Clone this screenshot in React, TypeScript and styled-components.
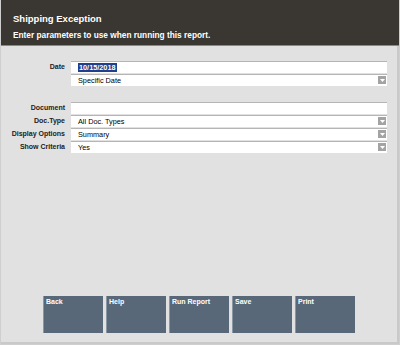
import React from 'react';
import styled, {createGlobalStyle} from 'styled-components';

const GlobalStyle = createGlobalStyle`
  html, body {
    margin: 0;
    padding: 0;
    background: #f2f2f2;
  }
  body {
    font-family: "Liberation Sans", Arial, sans-serif;
  }
`

const fields = [
    {label: 'Document', value: '', select: false},
    {label: 'Doc.Type', value: 'All Doc. Types', select: true},
    {label: 'Display Options', value: 'Summary', select: true},
    {label: 'Show Criteria', value: 'Yes', select: true},
]

const buttons = ['Back', 'Help', 'Run Report', 'Save', 'Print']

const DropArrow = () => (
    <ArrowBox>
        <svg width="5" height="3" viewBox="0 0 5 3">
            <path d="M0 0H5L2.5 3Z" fill="#fff"/>
        </svg>
    </ArrowBox>
)

export default function App() {
    return (
        <>
            <GlobalStyle/>
            <Window>
                <Header>
                    <Title>Shipping Exception</Title>
                    <Subtitle>Enter parameters to use when running this report.</Subtitle>
                </Header>
                <Body>
                    <Form $after={16}>
                        <Label>Date</Label>
                        <Stack>
                            <Field>
                                <Selected>10/15/2018</Selected>
                            </Field>
                            <Field>
                                Specific Date
                                <DropArrow/>
                            </Field>
                        </Stack>
                    </Form>
                    <Form>
                        {fields.map(f => (
                            <React.Fragment key={f.label}>
                                <Label>{f.label}</Label>
                                <Field>
                                    {f.value}
                                    {f.select && <DropArrow/>}
                                </Field>
                            </React.Fragment>
                        ))}
                    </Form>
                    <Spacer/>
                    <ButtonRow>
                        {buttons.map(b => (
                            <ActionButton key={b}>{b}</ActionButton>
                        ))}
                    </ButtonRow>
                </Body>
            </Window>
        </>
    );
}

const Window = styled.div`
  width: 400px;
  height: 345px;
  box-sizing: border-box;
  display: flex;
  flex-direction: column;
  border: 1px solid #cfcfcf;
  border-top: none;
`

const Header = styled.div`
  height: 46px;
  box-sizing: border-box;
  background: #3a3632;
  color: #fff;
  padding: 13px 12px 0;
  border-bottom: 1px solid #8a8886;
`

const Title = styled.div`
  font-size: 9.5px;
  font-weight: bold;
  line-height: 12px;
`

const Subtitle = styled.div`
  font-size: 8.3px;
  font-weight: bold;
  line-height: 10px;
  margin-top: 5px;
`

const Body = styled.div`
  flex: 1;
  background: #e1e1e1;
  border-right: 2px solid #c9c9c9;
  border-bottom: 2px solid #c9c9c9;
  padding-top: 15px;
  display: flex;
  flex-direction: column;
`

const Form = styled.div<{ $after?: number }>`
  display: grid;
  grid-template-columns: 64px 316px;
  column-gap: 6px;
  row-gap: 1px;
  align-items: center;
  margin-bottom: ${p => p.$after ?? 0}px;
`

const Stack = styled.div`
  display: flex;
  flex-direction: column;
  gap: 1px;
`

const Label = styled.div`
  font-size: 7px;
  font-weight: bold;
  color: #222;
  text-align: right;
  align-self: start;
  padding-top: 2px;
`

const Field = styled.div`
  position: relative;
  height: 12px;
  box-sizing: border-box;
  background: #fff;
  border-top: 1px solid #b5b5b5;
  padding: 0 7px;
  font-size: 7.3px;
  line-height: 11px;
  color: #000;
`

const Selected = styled.span`
  background: #1f3f8f;
  color: #fff;
  font-weight: bold;
  padding: 0 1px;
`

const ArrowBox = styled.span`
  position: absolute;
  right: 1px;
  top: 1px;
  width: 8px;
  height: 8px;
  background: #a3a3a3;
  display: flex;
  align-items: center;
  justify-content: center;
`

const Spacer = styled.div`
  flex: 1;
`

const ButtonRow = styled.div`
  display: flex;
  justify-content: center;
  gap: 3px;
  margin-bottom: 9px;
`

const ActionButton = styled.div`
  width: 60px;
  height: 37px;
  box-sizing: border-box;
  background: #586878;
  border-left: 1px solid #8a96a2;
  color: #fff;
  font-size: 7px;
  font-weight: bold;
  padding: 2px 2px;
`
